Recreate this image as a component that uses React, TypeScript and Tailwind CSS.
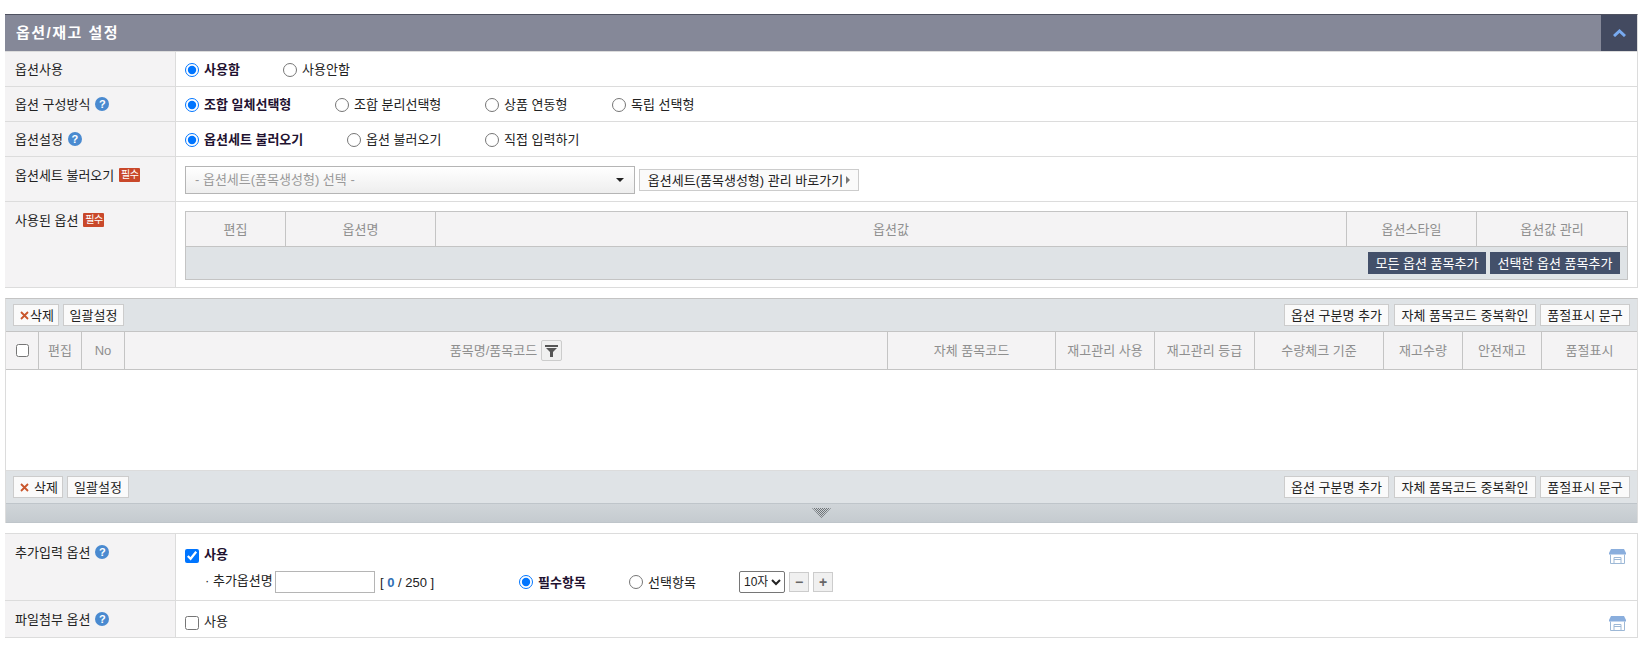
import React from 'react';

const font = { fontFamily: '"Liberation Sans", "Noto Sans CJK KR", sans-serif' };

function Help() {
  return (
    <span className="ml-[5px] inline-flex h-[14px] w-[14px] items-center justify-center rounded-full bg-[#4a8ad0] text-[11px] font-bold leading-none text-white">
      ?
    </span>
  );
}

function Required() {
  return (
    <span className="ml-[5px] inline-flex h-[14px] w-[21px] items-center justify-center rounded-[1px] bg-[#c9482a] text-[10px] leading-none tracking-[-0.5px] text-white">
      필수
    </span>
  );
}

function Radio({ label, checked, width }: { label: string; checked?: boolean; width: string }) {
  return (
    <label className={`flex items-center ${width}`}>
      <input type="radio" readOnly checked={!!checked} className="m-0 h-[14px] w-[14px] accent-[#0075ff]" />
      <span className={`ml-[5px] ${checked ? 'font-bold text-[#1f1230]' : 'text-[#222222]'}`}>{label}</span>
    </label>
  );
}

function Row({ label, height, top, children }: { label: React.ReactNode; height: string; top?: boolean; children: React.ReactNode }) {
  return (
    <div className={`flex border-b border-[#dcdcdc] ${height}`}>
      <div className={`flex w-[171px] shrink-0 border-r border-[#dcdcdc] bg-[#f4f3f4] pl-[10px] text-[#222222] ${top ? 'items-start pt-[11px]' : 'items-center'}`}>
        <span className="flex items-center">{label}</span>
      </div>
      {children}
    </div>
  );
}

function Btn({ children, className = '' }: { children: React.ReactNode; className?: string }) {
  return (
    <button className={`flex h-[22px] items-center justify-center border border-[#cccccc] bg-[#fafafa] text-[13px] leading-none text-[#222222] ${className}`}>
      {children}
    </button>
  );
}

function HeadCell({ children, className = '' }: { children?: React.ReactNode; className?: string }) {
  return (
    <div className={`flex items-center justify-center border-r border-[#c4c4c4] text-[#8f8f8f] last:border-r-0 ${className}`}>
      {children}
    </div>
  );
}

function Toolbar({ wide }: { wide?: boolean }) {
  return (
    <div className="flex h-[32px] items-start justify-between bg-[#dfe3e6] pl-[7px] pr-[7px] pt-[5px]">
      <div className="flex gap-[4px]">
        <Btn className={wide ? 'w-[50px] justify-start pl-[6px]' : 'w-[46px] justify-start pl-[6px]'}>
          <svg width="9" height="9" viewBox="0 0 9 9" className={wide ? 'mr-[5px]' : 'mr-[1px]'}>
            <path d="M1 1l7 7M8 1l-7 7" fill="none" stroke="#c9562c" strokeWidth="1.800" />
          </svg>
          삭제
        </Btn>
        <Btn className={wide ? 'w-[62px]' : 'w-[61px]'}>일괄설정</Btn>
      </div>
      <div className="flex gap-[4px]">
        <Btn className="mr-[1px] w-[105px]">옵션 구분명 추가</Btn>
        <Btn className="w-[142px]">자체 품목코드 중복확인</Btn>
        <Btn className="w-[90px]">품절표시 문구</Btn>
      </div>
    </div>
  );
}

function Store({ className = '' }: { className?: string }) {
  return (
    <svg width="17" height="15" viewBox="0 0 17 15" className={className}>
      <path d="M2 0h13l2 4v1.500H0V4z" fill="#8aaedd" />
      <path d="M1.500 5.500v9h14v-9" fill="none" stroke="#9db8d6" />
      <path d="M5 14.500V8.500h7v6M5 10.500h7" fill="none" stroke="#9db8d6" />
    </svg>
  );
}

export default function App() {
  return (
    <div style={font} className="h-[663px] w-[1638px] overflow-hidden bg-white pl-[5px] pt-[14px] text-[13px] leading-none">
      <div className="flex h-[37px] items-stretch justify-between border-r border-t border-r-[#dcdcdc] border-t-[#4f5260] bg-[#858898] pl-[11px]">
        <h2 className="flex items-center pb-[1px] text-[15px] font-bold tracking-[1.5px] text-white">옵션/재고 설정</h2>
        <button className="flex w-[36px] items-center justify-center bg-[#434a60]">
          <svg width="13" height="8" viewBox="0 0 13 8">
            <path d="M1 7l5.500-5 5.500 5" fill="none" stroke="#78aaf0" strokeWidth="3" />
          </svg>
        </button>
      </div>

      <div className="border-r border-t border-[#dcdcdc]">
        <Row label="옵션사용" height="h-[35px]">
          <div className="flex items-center pl-[9px] pt-[1px]">
            <Radio label="사용함" checked width="w-[98px]" />
            <Radio label="사용안함" width="w-[80px]" />
          </div>
        </Row>
        <Row label={<>옵션 구성방식<Help /></>} height="h-[35px]">
          <div className="flex items-center pl-[9px] pt-[1px]">
            <Radio label="조합 일체선택형" checked width="w-[150px]" />
            <Radio label="조합 분리선택형" width="w-[150px]" />
            <Radio label="상품 연동형" width="w-[127px]" />
            <Radio label="독립 선택형" width="w-[100px]" />
          </div>
        </Row>
        <Row label={<>옵션설정<Help /></>} height="h-[35px]">
          <div className="flex items-center pl-[9px] pt-[1px]">
            <Radio label="옵션세트 불러오기" checked width="w-[162px]" />
            <Radio label="옵션 불러오기" width="w-[138px]" />
            <Radio label="직접 입력하기" width="w-[110px]" />
          </div>
        </Row>
        <Row label={<>옵션세트 불러오기<Required /></>} height="h-[45px]" top>
          <div className="flex items-start pl-[9px] pt-[9px]">
            <div className="flex h-[28px] w-[450px] items-center justify-between border border-[#b5b5b5] bg-gradient-to-b from-white to-[#eeeeee] pb-[1px] pl-[9px] pr-[10px] text-[#9a9a9a]">
              <span>- 옵션세트(품목생성형) 선택 -</span>
              <span className="h-0 w-0 border-x-[4px] border-t-[4px] border-x-transparent border-t-[#222222]" />
            </div>
            <Btn className="ml-[4px] mt-[3px] w-[220px]">
              옵션세트(품목생성형) 관리 바로가기
              <span className="ml-[3px] h-0 w-0 border-y-[4px] border-l-[4px] border-y-transparent border-l-[#777777]" />
            </Btn>
          </div>
        </Row>
        <Row label={<>사용된 옵션<Required /></>} height="h-[86px]" top>
          <div className="pl-[9px] pt-[9px]">
            <div className="w-[1443px] border border-[#c4c4c4]">
              <div className="flex h-[35px] border-b border-[#c4c4c4] bg-[#f4f3f4]">
                <HeadCell className="w-[100px]">편집</HeadCell>
                <HeadCell className="w-[150px]">옵션명</HeadCell>
                <HeadCell className="flex-1">옵션값</HeadCell>
                <HeadCell className="w-[130px]">옵션스타일</HeadCell>
                <HeadCell className="w-[150px]">옵션값 관리</HeadCell>
              </div>
              <div className="flex h-[32px] items-center justify-end gap-[4px] bg-[#dfe3e6] pr-[7px]">
                <button className="h-[22px] w-[118px] bg-[#43506a] text-[13px] text-white">모든 옵션 품목추가</button>
                <button className="h-[22px] w-[130px] bg-[#43506a] text-[13px] text-white">선택한 옵션 품목추가</button>
              </div>
            </div>
          </div>
        </Row>
      </div>

      <div className="mt-[10px] border-x border-t border-x-[#dcdcdc] border-t-[#c4c4c4]">
        <Toolbar />
        <div className="flex h-[39px] border-y border-[#c4c4c4] bg-[#f4f3f4]">
          <HeadCell className="w-[33px]">
            <input type="checkbox" readOnly className="m-0 h-[13px] w-[13px]" />
          </HeadCell>
          <HeadCell className="w-[43px]">편집</HeadCell>
          <HeadCell className="w-[43px]">No</HeadCell>
          <HeadCell className="flex-1">
            품목명/품목코드
            <span className="ml-[4px] flex h-[21px] w-[21px] items-center justify-center rounded-[2px] border border-[#cccccc] bg-[#f0f0f0]">
              <svg width="13" height="12" viewBox="0 0 13 12">
                <path d="M0 0h13v2H0zM1 3h11L8 7v5H5V7z" fill="#555555" />
              </svg>
            </span>
          </HeadCell>
          <HeadCell className="w-[168px]">자체 품목코드</HeadCell>
          <HeadCell className="w-[99px]">재고관리 사용</HeadCell>
          <HeadCell className="w-[100px]">재고관리 등급</HeadCell>
          <HeadCell className="w-[129px]">수량체크 기준</HeadCell>
          <HeadCell className="w-[79px]">재고수량</HeadCell>
          <HeadCell className="w-[79px]">안전재고</HeadCell>
          <HeadCell className="w-[95px]">품절표시</HeadCell>
        </div>
        <div className="h-[100px] bg-white" />
        <div className="border-t border-[#dcdcdc]">
          <Toolbar wide />
        </div>
        <div className="flex h-[20px] items-center justify-center border-y border-[#bfc5ca] bg-gradient-to-b from-[#d0d5d9] to-[#c5cbd0]">
          <svg width="19" height="10" viewBox="0 0 19 10">
            <defs>
              <pattern id="grip" width="2" height="2" patternUnits="userSpaceOnUse">
                <rect width="1" height="1" fill="#6f7478" />
                <rect x="1" y="1" width="1" height="1" fill="#6f7478" />
              </pattern>
            </defs>
            <path d="M0 0h19L9.500 10z" fill="url(#grip)" />
          </svg>
        </div>
      </div>

      <div className="mt-[10px] border-r border-t border-[#dcdcdc]">
        <Row label={<>추가입력 옵션<Help /></>} height="h-[67px]" top>
          <div className="flex flex-1 justify-between pl-[9px] pr-[11px]">
            <div className="pt-[15px]">
              <label className="flex h-[14px] items-center">
                <input type="checkbox" readOnly checked className="m-0 h-[14px] w-[14px] accent-[#0075ff]" />
                <span className="mb-[3px] ml-[5px] font-bold text-[#1f1230]">사용</span>
              </label>
              <div className="mt-[8px] flex h-[22px] items-center">
                <span className="mb-[3px] ml-[20px] w-[70px] whitespace-nowrap text-[#222222]">· 추가옵션명</span>
                <input readOnly className="h-[22px] w-[100px] border border-[#b5b5b5] bg-white" />
                <span className="ml-[5px] w-[139px] text-[#222222]">
                  [ <b className="text-[#2f6fb5]">0</b> / 250 ]
                </span>
                <Radio label="필수항목" checked width="w-[110px]" />
                <Radio label="선택항목" width="w-[110px]" />
                <select className="h-[22px] w-[46px] rounded-[2px] border border-[#767676] bg-white text-[12px] text-[#222222]">
                  <option>10자</option>
                </select>
                <button className="ml-[4px] flex h-[20px] w-[20px] items-center justify-center border border-[#cccccc] bg-[#f0f0f0] text-[14px] font-bold text-[#666666]">−</button>
                <button className="ml-[4px] flex h-[20px] w-[20px] items-center justify-center border border-[#cccccc] bg-[#f0f0f0] text-[14px] font-bold text-[#666666]">+</button>
              </div>
            </div>
            <Store className="mt-[15px]" />
          </div>
        </Row>
        <Row label={<>파일첨부 옵션<Help /></>} height="h-[37px]" top>
          <div className="flex flex-1 items-start justify-between pl-[9px] pr-[11px] pt-[15px]">
            <label className="flex h-[14px] items-center">
              <input type="checkbox" readOnly className="m-0 h-[14px] w-[14px]" />
              <span className="mb-[3px] ml-[5px] text-[#222222]">사용</span>
            </label>
            <Store />
          </div>
        </Row>
      </div>
    </div>
  );
}
